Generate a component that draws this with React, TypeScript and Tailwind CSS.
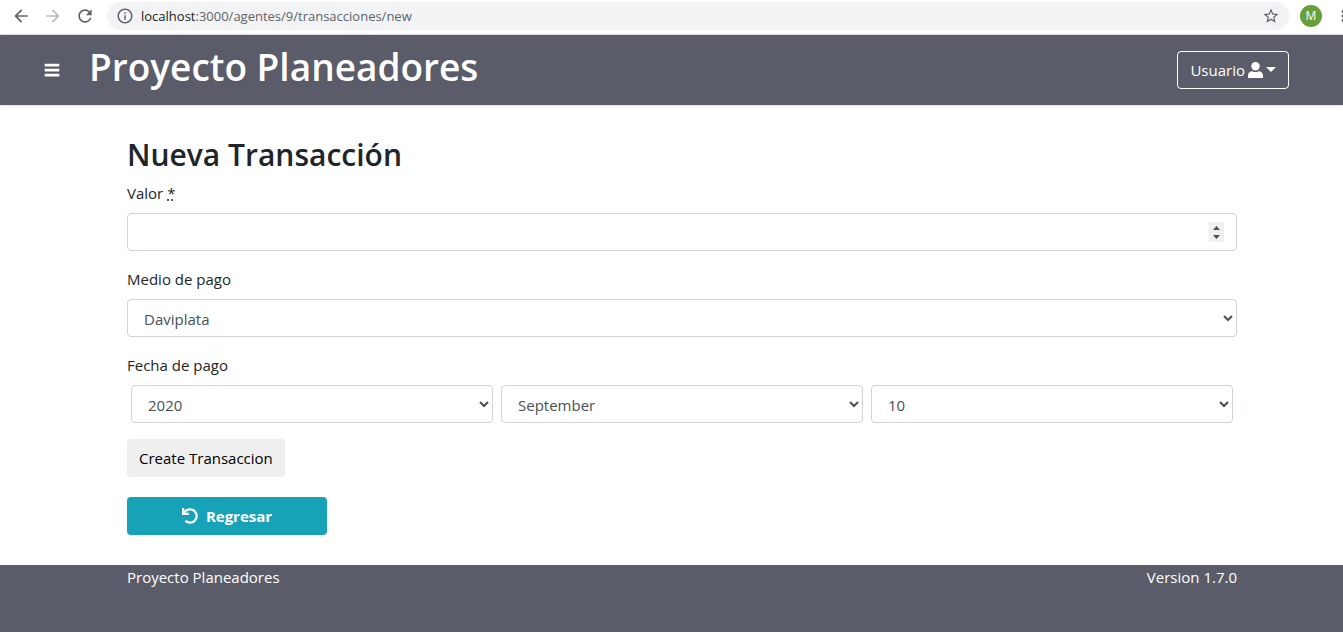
import { useRef } from "react";
import type { ReactNode, SelectHTMLAttributes } from "react";
import { FaUndo } from "react-icons/fa";
import {
  MdArrowBack,
  MdArrowForward,
  MdInfoOutline,
  MdMoreVert,
  MdRefresh,
  MdStarBorder,
} from "react-icons/md";

function BrowserBar() {
  return (
    <div className="flex h-[35px] items-start overflow-hidden border-b border-[#dadce0] bg-white pt-[2px] pl-[11px] text-[#5f6368]">
      <div className="flex h-7 shrink-0 items-center gap-3">
        <button type="button" aria-label="Atrás">
          <MdArrowBack size={20} />
        </button>
        <button type="button" aria-label="Adelante" className="text-[#babcbe]">
          <MdArrowForward size={20} />
        </button>
        <button type="button" aria-label="Recargar">
          <MdRefresh size={20} />
        </button>
      </div>
      <div className="ml-3 flex h-7 min-w-0 flex-1 items-center rounded-full bg-[#f1f3f4] px-[9px]">
        <MdInfoOutline size={18} className="shrink-0" />
        <p className="ml-[7px] flex-1 truncate text-[13px] leading-5">
          <span className="text-[#202124]">localhost</span>
          :3000/agentes/9/transacciones/new
        </p>
        <button type="button" aria-label="Añadir a marcadores">
          <MdStarBorder size={18} />
        </button>
      </div>
      <div className="ml-[11px] flex h-7 shrink-0 items-center">
        <button
          type="button"
          aria-label="Perfil M"
          className="flex size-[22px] items-center justify-center rounded-full bg-[#689f38] text-xs text-white"
        >
          M
        </button>
      </div>
      <div className="ml-3 flex h-7 w-[9px] shrink-0 items-center overflow-hidden">
        <button type="button" aria-label="Menú del navegador" className="shrink-0">
          <MdMoreVert size={18} />
        </button>
      </div>
    </div>
  );
}

function Header() {
  return (
    <header className="flex h-[70px] items-center bg-[#5a5c69] pr-[54px] pl-11 text-white shadow-sm">
      <button type="button" aria-label="Abrir menú">
        <svg viewBox="0 0 16 16" className="size-4" fill="currentColor" aria-hidden="true">
          <path d="M.7 1.8h14.6v2.6H.7zM.7 6.8h14.6v2.6H.7zM.7 11.8h14.6v2.6H.7z" />
        </svg>
      </button>
      <h1 className="ml-[29px] flex-1 pb-[6px] text-[37px] leading-[48px] font-semibold">
        Proyecto Planeadores
      </h1>
      <button
        type="button"
        className="flex h-[38px] items-center rounded border border-white px-3 text-[15px] leading-6"
      >
        Usuario
        <svg viewBox="0 0 15 16" className="ml-[3px] h-4 w-[15px]" fill="currentColor" aria-hidden="true">
          <circle cx="7.5" cy="4.2" r="4.2" />
          <path d="M0 16v-2.400C0 11 1.800 9.300 4.300 9.300c1 .6 2 .8 3.200.8s2.200-.2 3.200-.8C13.200 9.300 15 11 15 13.600V16z" />
        </svg>
        <svg viewBox="0 0 10 5" className="mb-[2px] ml-[3px] h-[5px] w-[10px]" fill="currentColor" aria-hidden="true">
          <path d="M0 0h10L5 5z" />
        </svg>
      </button>
    </header>
  );
}

function NumberField({ id }: { id: string }) {
  const input = useRef<HTMLInputElement>(null);
  return (
    <div className="relative mt-2 w-full">
      <input
        ref={input}
        id={id}
        type="number"
        className="block h-[38px] w-full rounded border border-[#ced4da] bg-white pr-8 pl-3 text-[15px] text-[#495057] [&::-webkit-inner-spin-button]:appearance-none"
      />
      <div className="absolute inset-y-0 right-[13px] my-auto flex h-5 w-[15px] flex-col bg-[#f0f0f0] text-[#505050]">
        <button
          type="button"
          aria-label="Aumentar"
          className="flex flex-1 items-end justify-center pb-[2px]"
          onClick={() => input.current?.stepUp()}
        >
          <svg viewBox="0 0 7 4" className="h-1 w-[7px]" fill="currentColor" aria-hidden="true">
            <path d="M0 4h7L3.500 0z" />
          </svg>
        </button>
        <button
          type="button"
          aria-label="Disminuir"
          className="flex flex-1 items-start justify-center pt-[3px]"
          onClick={() => input.current?.stepDown()}
        >
          <svg viewBox="0 0 7 4" className="h-1 w-[7px]" fill="currentColor" aria-hidden="true">
            <path d="M0 0h7L3.500 4z" />
          </svg>
        </button>
      </div>
    </div>
  );
}

function Select({
  children,
  ...props
}: { children: ReactNode } & SelectHTMLAttributes<HTMLSelectElement>) {
  return (
    <select
      {...props}
      className="h-[38px] w-full min-w-0 rounded border border-[#ced4da] bg-white px-3 pt-[2px] text-[15px] text-[#495057]"
    >
      {children}
    </select>
  );
}

function TransactionForm() {
  return (
    <form className="flex flex-col items-start" onSubmit={(e) => e.preventDefault()}>
      <label htmlFor="valor" className="leading-6">
        Valor{" "}
        <abbr title="requerido" className="underline decoration-dotted">
          *
        </abbr>
      </label>
      <NumberField id="valor" />

      <label htmlFor="medio" className="mt-4 leading-6">
        Medio de pago
      </label>
      <div className="mt-2 w-full">
        <Select id="medio" defaultValue="Daviplata">
          <option>Daviplata</option>
          <option>Efectivo</option>
        </Select>
      </div>

      <label htmlFor="anio" className="mt-4 leading-6">
        Fecha de pago
      </label>
      <div className="mt-2 grid w-full grid-cols-3 gap-2 px-1">
        <Select id="anio" defaultValue="2020">
          <option>2020</option>
          <option>2021</option>
        </Select>
        <Select aria-label="Mes" defaultValue="September">
          <option>September</option>
          <option>October</option>
        </Select>
        <Select aria-label="Día" defaultValue="10">
          <option>10</option>
          <option>11</option>
        </Select>
      </div>

      <button
        type="submit"
        className="mt-4 h-[38px] rounded bg-[#efefef] px-3 leading-6 text-black"
      >
        Create Transaccion
      </button>
    </form>
  );
}

export default function App() {
  return (
    <div className="flex min-h-screen flex-col bg-white font-['Open_Sans',sans-serif] text-[15px] text-[#212529]">
      <BrowserBar />
      <Header />
      <main className="pt-[30px] pb-[30px] pl-[21px]">
        <div className="mx-auto max-w-[1110px]">
          <h2 className="mb-[6px] text-[30px] leading-10 font-semibold">Nueva Transacción</h2>
          <TransactionForm />
          <a
            href="#regresar"
            className="mt-5 flex h-[38px] w-[200px] items-center justify-center gap-2 rounded bg-[#17a2b8] font-bold text-white"
          >
            <FaUndo size={16} />
            Regresar
          </a>
        </div>
      </main>
      <footer className="flex-1 bg-[#5a5c69] pl-[21px] leading-6 text-white">
        <div className="mx-auto flex max-w-[1110px] justify-between">
          <p>Proyecto Planeadores</p>
          <p>Version 1.7.0</p>
        </div>
      </footer>
    </div>
  );
}
